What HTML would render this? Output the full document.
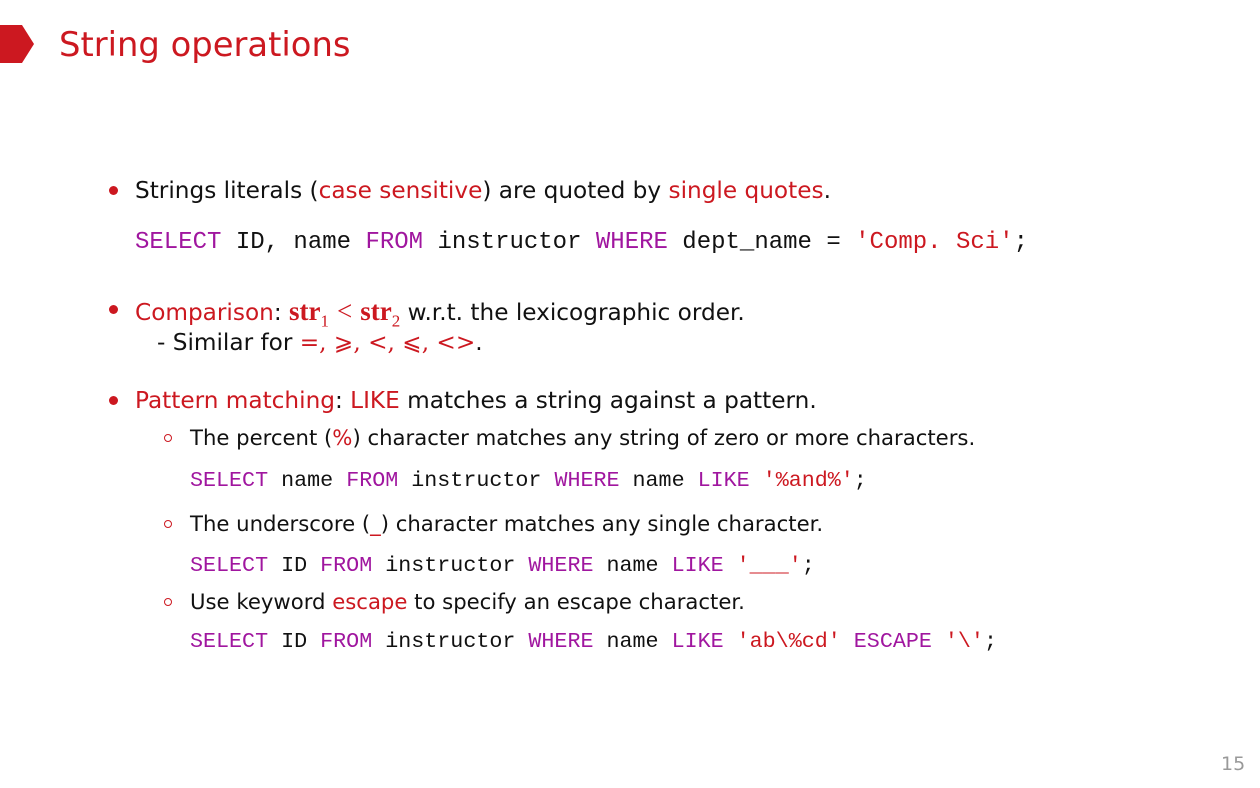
<!DOCTYPE html>
<html><head><meta charset="utf-8"><style>
body{margin:0;width:1260px;height:788px;background:#fff;position:relative;overflow:hidden;font-family:"DejaVu Sans","Liberation Sans",sans-serif;color:#111}
.a{position:absolute;white-space:nowrap}
.r{color:#cc1820}
.m{color:#a0169f}
.mono{font-family:"Liberation Mono",monospace}
.big{font-size:23.2px}
.sm{font-size:21.2px}
.c1{font-size:24px}
.c2{font-size:21.7px}
.dot{position:absolute;width:9px;height:9px;border-radius:50%;background:#cc1820}
.circ{position:absolute;width:6px;height:6px;border-radius:50%;border:1.5px solid #cc1820}
</style></head><body>
<svg class="a" style="left:0;top:25px" width="36" height="40"><polygon points="0,0 22,0 34,19 22,38 0,38" fill="#cc1820"/></svg>
<div class="a r" style="left:59px;top:25px;font-size:33.8px">String operations</div>

<div class="dot" style="left:109px;top:186px"></div>
<div class="a big" style="left:135px;top:177px">Strings literals (<span class="r">case sensitive</span>) are quoted by <span class="r">single quotes</span>.</div>
<div class="a mono c1" style="left:135px;top:229px"><span class="m">SELECT</span> ID, name <span class="m">FROM</span> instructor <span class="m">WHERE</span> dept_name = <span class="r">'Comp. Sci'</span>;</div>

<div class="dot" style="left:109px;top:305px"></div>
<div class="a big" style="left:135px;top:296px"><span class="r">Comparison</span>: <span class="r" style="font-family:'Liberation Serif',serif;font-size:27px;font-weight:bold">str<sub style="font-size:17px;font-weight:normal">1</sub><span style="font-weight:normal;margin:0 8px">&lt;</span>str<sub style="font-size:17px;font-weight:normal">2</sub></span> w.r.t. the lexicographic order.</div>
<div class="a big" style="left:157px;top:329px">- Similar for <span class="r" style="font-family:'DejaVu Serif',serif">=, ⩾, &lt;, ⩽, &lt;&gt;</span>.</div>

<div class="dot" style="left:109px;top:396px"></div>
<div class="a big" style="left:135px;top:387px"><span class="r">Pattern matching</span>: <span class="r">LIKE</span> matches a string against a pattern.</div>

<div class="circ" style="left:164px;top:434px"></div>
<div class="a sm" style="left:190px;top:425px">The percent (<span class="r">%</span>) character matches any string of zero or more characters.</div>
<div class="a mono c2" style="left:190px;top:468px"><span class="m">SELECT</span> name <span class="m">FROM</span> instructor <span class="m">WHERE</span> name <span class="m">LIKE</span> <span class="r">'%and%'</span>;</div>

<div class="circ" style="left:164px;top:520px"></div>
<div class="a sm" style="left:190px;top:511px">The underscore (<span class="r">_</span>) character matches any single character.</div>
<div class="a mono c2" style="left:190px;top:553px"><span class="m">SELECT</span> ID <span class="m">FROM</span> instructor <span class="m">WHERE</span> name <span class="m">LIKE</span> <span class="r">'___'</span>;</div>

<div class="circ" style="left:164px;top:598px"></div>
<div class="a sm" style="left:190px;top:589px">Use keyword <span class="r">escape</span> to specify an escape character.</div>
<div class="a mono c2" style="left:190px;top:629px"><span class="m">SELECT</span> ID <span class="m">FROM</span> instructor <span class="m">WHERE</span> name <span class="m">LIKE</span> <span class="r">'ab\%cd'</span> <span class="m">ESCAPE</span> <span class="r">'\'</span>;</div>

<div class="a" style="left:1221px;top:753px;font-size:19px;color:#999">15</div>
</body></html>
